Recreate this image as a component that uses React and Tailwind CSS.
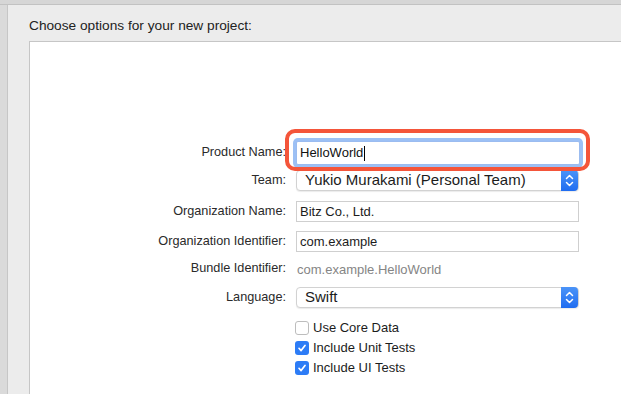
const FONT = { fontFamily: '"Liberation Sans", Arial, sans-serif' };

function Stepper() {
  return (
    <div className="flex h-[21px] w-[17px] items-center justify-center rounded-r-[4px] bg-gradient-to-b from-[#4b94f8] to-[#1f6cf0]">
      <svg width="9" height="13" viewBox="0 0 9 13" fill="none" stroke="white" strokeWidth="1.5" strokeLinecap="round" strokeLinejoin="round">
        <path d="M1.5 4.5 L4.5 1.5 L7.5 4.5" />
        <path d="M1.5 8.5 L4.5 11.5 L7.5 8.5" />
      </svg>
    </div>
  );
}

function Popup({ value }) {
  return (
    <div className="flex h-[21px] w-[283px] items-center justify-between rounded-[4px] border border-[#d2d2d2] bg-white pl-[8px] shadow-[0_1px_1px_rgba(0,0,0,0.08)]">
      <span className="text-[15px] text-[#1c1c1c]">{value}</span>
      <Stepper />
    </div>
  );
}

function TextField({ value }) {
  return (
    <div className="flex h-[21px] w-[283px] items-center border border-[#cfcfcf] bg-white pl-[3px] text-[13px] text-[#1c1c1c]">
      {value}
    </div>
  );
}

function Row({ label, className, children }) {
  return (
    <div className={`flex items-center ${className}`}>
      <div className="w-[257px] pr-[1px] text-right text-[12.7px] text-[#2a2a2a]">{label}</div>
      <div className="ml-[9px]">{children}</div>
    </div>
  );
}

function Checkbox({ checked, label }) {
  return (
    <div className="flex h-[20px] items-center">
      {checked ? (
        <div className="flex h-[14px] w-[14px] items-center justify-center rounded-[3px] bg-[#2d7cf6]">
          <svg width="10" height="10" viewBox="0 0 10 10" fill="none" stroke="white" strokeWidth="1.7" strokeLinecap="round" strokeLinejoin="round">
            <path d="M2 5.3 L4.1 7.6 L8 2.4" />
          </svg>
        </div>
      ) : (
        <div className="h-[14px] w-[14px] rounded-[3px] border border-[#bdbdbd] bg-white" />
      )}
      <span className="ml-[4px] text-[13px] text-[#1c1c1c]">{label}</span>
    </div>
  );
}

export default function App() {
  return (
    <div className="flex h-[394px] w-[621px] flex-col overflow-hidden bg-[#ececec]" style={FONT}>
      {/* top strip */}
      <div className="h-[5px] shrink-0 border-b border-[#c2c2c2] bg-[#d6d6d6]" />
      <div className="flex min-h-0 flex-1">
        {/* left strip */}
        <div className="w-[8px] shrink-0 border-r border-[#c6c6c6] bg-[#dadada]" />
        <div className="flex min-w-0 flex-1 flex-col pl-[21px]">
          <div className="mt-[12px] h-[17px] text-[13.7px] leading-[17px] text-[#222]">
            Choose options for your new project:
          </div>
          <div className="mt-[7px] flex-1 border-l border-t border-[#c6c6c6] bg-white pt-[99px]">
            <Row label="Product Name:" className="h-[24px]">
              <div className="relative">
                <div className="flex h-[24px] w-[284px] items-center rounded-[2px] border border-[#9bbcf0] bg-white pl-[3px] text-[13px] text-[#111] shadow-[0_0_0_3px_#9cc0f5]">
                  HelloWorld
                  <span className="ml-[1px] h-[15px] w-[1px] bg-black" />
                </div>
                <div className="absolute left-[-11px] right-[-10px] top-[-12px] bottom-[-6px] rounded-[10px] border-4 border-[#f4553a]" />
              </div>
            </Row>
            <Row label="Team:" className="mt-[5px] h-[21px]">
              <Popup value="Yukio Murakami (Personal Team)" />
            </Row>
            <Row label="Organization Name:" className="mt-[10px] h-[21px]">
              <TextField value="Bitz Co., Ltd." />
            </Row>
            <Row label="Organization Identifier:" className="mt-[9px] h-[21px]">
              <TextField value="com.example" />
            </Row>
            <Row label="Bundle Identifier:" className="mt-[7px] h-[20px]">
              <span className="pl-[1px] text-[13px] text-[#858585]">com.example.HelloWorld</span>
            </Row>
            <Row label="Language:" className="mt-[8px] h-[21px]">
              <Popup value="Swift" />
            </Row>
            <div className="mt-[10px] pl-[265px]">
              <Checkbox checked={false} label="Use Core Data" />
              <Checkbox checked label="Include Unit Tests" />
              <Checkbox checked label="Include UI Tests" />
            </div>
          </div>
        </div>
      </div>
    </div>
  );
}
